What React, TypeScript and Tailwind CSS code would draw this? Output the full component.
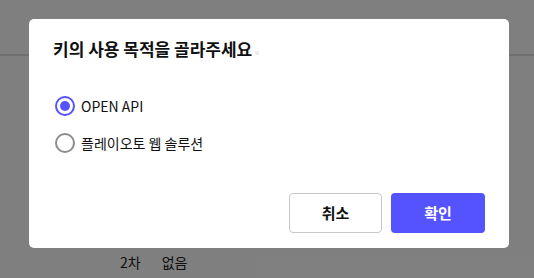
import React, { useState } from "react";

const font = { fontFamily: '"Noto Sans CJK KR", "Noto Sans", sans-serif' };

function Radio({ checked, label, onClick }: { checked: boolean; label: string; onClick: () => void }) {
  return (
    <button type="button" onClick={onClick} className="flex h-5 items-center gap-[6px] text-left">
      <span
        className={
          checked
            ? "flex h-5 w-5 items-center justify-center rounded-full border-2 border-[#5552ff]"
            : "flex h-5 w-5 items-center justify-center rounded-full border-2 border-[#8c8c8c]"
        }
      >
        {checked && <span className="h-[10px] w-[10px] rounded-full bg-[#5552ff]" />}
      </span>
      <span className="text-[14px] leading-5 text-[#111]">{label}</span>
    </button>
  );
}

export default function App() {
  const [purpose, setPurpose] = useState<"api" | "web">("api");

  return (
    <div className="relative h-[278px] w-[534px] overflow-hidden bg-white" style={font}>
      {/* page behind the dialog */}
      <div className="h-[56px] border-b-2 border-[#dedede]" />
      <div className="flex gap-[21px] pl-[120px] pt-[196px] text-[14px] leading-5 text-[#222]">
        <span>2차</span>
        <span>없음</span>
      </div>

      {/* dim */}
      <div className="absolute inset-0 bg-black/50" />

      {/* dialog */}
      <div className="absolute left-[29px] top-[19px] flex h-[229px] w-[480px] flex-col rounded-[5px] bg-white px-6 pt-[18px]">
        <div className="flex items-center gap-[3px]">
          <h2 className="text-[17px] font-bold leading-6 text-[#111]">키의 사용 목적을 골라주세요</h2>
          <span className="mt-[8px] h-[4px] w-[4px] bg-[#ececec]" />
        </div>

        <div className="mt-[35px] flex flex-col gap-[17px] pl-[2px]">
          <Radio checked={purpose === "api"} label="OPEN API" onClick={() => setPurpose("api")} />
          <Radio checked={purpose === "web"} label="플레이오토 웹 솔루션" onClick={() => setPurpose("web")} />
        </div>

        <div className="mt-[40px] flex justify-end gap-[9px]">
          <button
            type="button"
            className="h-10 w-[93px] rounded-[4px] border border-[#c8c8c8] bg-white text-[15px] font-bold text-[#111]"
          >
            취소
          </button>
          <button type="button" className="h-10 w-[94px] rounded-[4px] bg-[#5552ff] text-[15px] font-bold text-white">
            확인
          </button>
        </div>
      </div>
    </div>
  );
}
